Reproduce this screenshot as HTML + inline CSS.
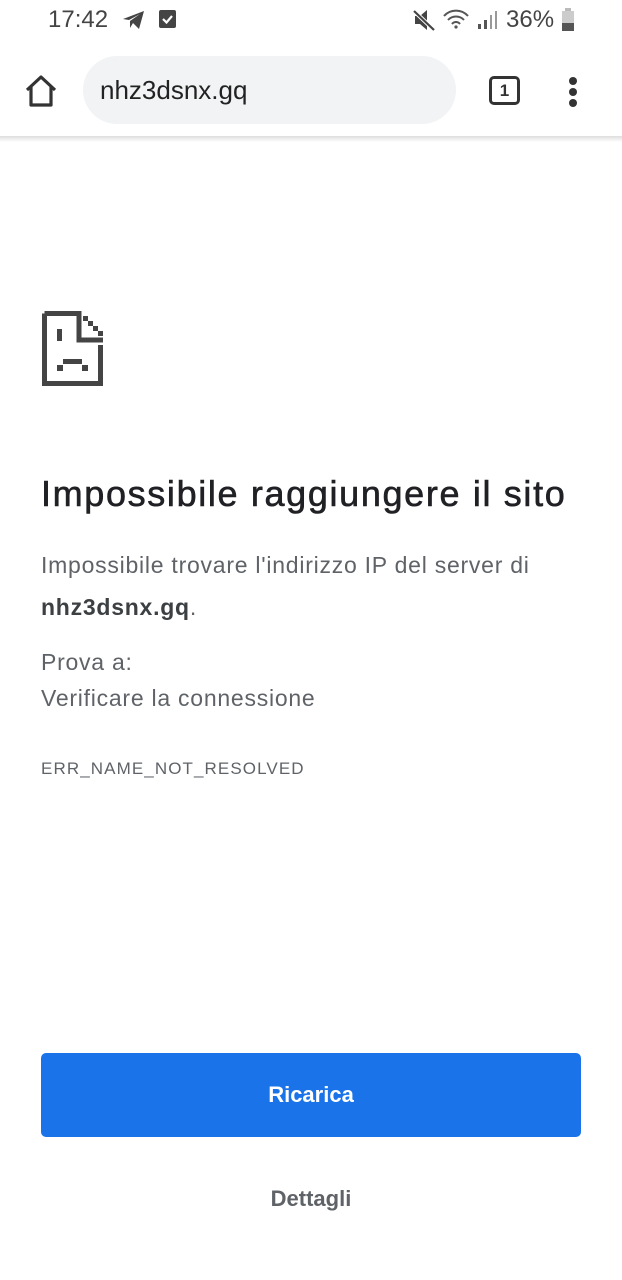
<!DOCTYPE html>
<html><head><meta charset="utf-8"><style>
*{margin:0;padding:0;box-sizing:border-box}
body{width:622px;height:1280px;background:#fff;font-family:"Liberation Sans",sans-serif;position:relative;overflow:hidden}
.a{position:absolute}
</style></head><body>
<div class="a" style="left:48px;top:6px;font-size:24px;color:#444">17:42</div>
<svg class="a" style="left:122px;top:9px" width="24" height="22" viewBox="0 0 24 22"><path d="M1 10 L22 2 L17 20 L11 14 L8 19 L8 12 L18 5 L7 11 Z" fill="#444"/></svg>
<svg class="a" style="left:158px;top:9px" width="20" height="20"><rect x="1" y="1" width="17" height="18" rx="2" fill="#444"/><path d="M5 10 L8.5 13.5 L14 7" stroke="#fff" stroke-width="2.2" fill="none"/></svg>
<svg class="a" style="left:412px;top:8px" width="24" height="24" viewBox="0 0 24 24"><path d="M3 8 H8 L15 2 V22 L8 16 H3 Z" fill="#444"/><path d="M2 3 L22 22" stroke="#fff" stroke-width="4"/><path d="M2 3 L22 22" stroke="#444" stroke-width="2.2"/></svg>
<svg class="a" style="left:442px;top:8px" width="30" height="22" viewBox="0 0 30 22"><path d="M2 8 A16 16 0 0 1 26 8" stroke="#555" stroke-width="2" fill="none"/><path d="M6 12 A11 11 0 0 1 22 12" stroke="#555" stroke-width="2" fill="none"/><path d="M10 16 A5 5 0 0 1 18 16" stroke="#555" stroke-width="2" fill="none"/><circle cx="14" cy="19" r="1.6" fill="#555"/></svg>
<svg class="a" style="left:476px;top:10px" width="22" height="20"><rect x="2" y="14" width="3" height="5" fill="#555"/><rect x="8" y="10" width="3" height="9" fill="#555"/><rect x="14" y="5" width="2" height="14" fill="#999"/><rect x="19" y="1" width="2" height="18" fill="#999"/></svg>
<div class="a" style="left:506px;top:6px;font-size:24px;color:#444">36%</div>
<svg class="a" style="left:561px;top:8px" width="14" height="24"><rect x="4" y="0" width="6" height="3" fill="#bbb"/><rect x="1" y="3" width="12" height="20" fill="#ccc"/><rect x="1" y="15" width="12" height="8" fill="#555"/></svg>

<svg class="a" style="left:24px;top:74px" width="36" height="34" viewBox="0 0 36 34"><path d="M3 16 L17 3 L31 16 M7 12 V31 H27 V12" stroke="#333" stroke-width="3.2" fill="none" stroke-linejoin="round"/></svg>
<div class="a" style="left:83px;top:56px;width:373px;height:68px;border-radius:34px;background:#f1f3f4"></div>
<div class="a" style="left:100px;top:75px;font-size:26px;color:#222">nhz3dsnx.gq</div>
<div class="a" style="left:489px;top:76px;width:31px;height:29px;border:3px solid #333;border-radius:5px;font-size:17px;font-weight:bold;color:#333;text-align:center;line-height:23px">1</div>
<div class="a" style="left:569px;top:77px;width:8px;height:8px;border-radius:4px;background:#333"></div>
<div class="a" style="left:569px;top:88px;width:8px;height:8px;border-radius:4px;background:#333"></div>
<div class="a" style="left:569px;top:99px;width:8px;height:8px;border-radius:4px;background:#333"></div>
<div class="a" style="left:0;top:136px;width:622px;height:6px;background:linear-gradient(#ddd,#fff)"></div>

<svg class="a" style="left:0;top:0" width="622" height="400">
<path d="M44.5 313.5 H79 M44.5 313.5 V383.5 H100.5 V345" stroke="#444" stroke-width="5" fill="none"/>
<path d="M79 311 V340 H103" stroke="#444" stroke-width="5" fill="none"/>
<rect x="83" y="316" width="5" height="5" fill="#444"/><rect x="88" y="321" width="5" height="5" fill="#444"/><rect x="93" y="326" width="5" height="5" fill="#444"/><rect x="98" y="331" width="5" height="5" fill="#444"/>
<rect x="57" y="329" width="5" height="12" fill="#444"/>
<rect x="63" y="359" width="19" height="5" fill="#444"/>
<rect x="57" y="365" width="6" height="6" fill="#444"/><rect x="82" y="365" width="6" height="6" fill="#444"/>
</svg>

<div class="a" style="left:41px;top:473px;font-size:36px;color:#202124;letter-spacing:1.65px;-webkit-text-stroke:0.6px #202124;white-space:nowrap">Impossibile raggiungere il sito</div>
<div class="a" style="left:41px;top:544px;font-size:23px;color:#5f6368;line-height:42px;letter-spacing:0.75px;white-space:nowrap">Impossibile trovare l'indirizzo IP del server di<br><b style="color:#3c4043">nhz3dsnx.gq</b>.</div>
<div class="a" style="left:41px;top:644px;font-size:23px;color:#5f6368;line-height:36px;letter-spacing:0.75px">Prova a:<br>Verificare la connessione</div>
<div class="a" style="left:41px;top:759px;font-size:17px;color:#5f6368;letter-spacing:1.1px">ERR_NAME_NOT_RESOLVED</div>

<div class="a" style="left:41px;top:1053px;width:540px;height:84px;border-radius:5px;background:#1a73e8;color:#fff;font-size:22px;font-weight:bold;text-align:center;line-height:84px">Ricarica</div>
<div class="a" style="left:0;top:1186px;width:622px;text-align:center;font-size:22px;font-weight:bold;color:#5f6368">Dettagli</div>
</body></html>
